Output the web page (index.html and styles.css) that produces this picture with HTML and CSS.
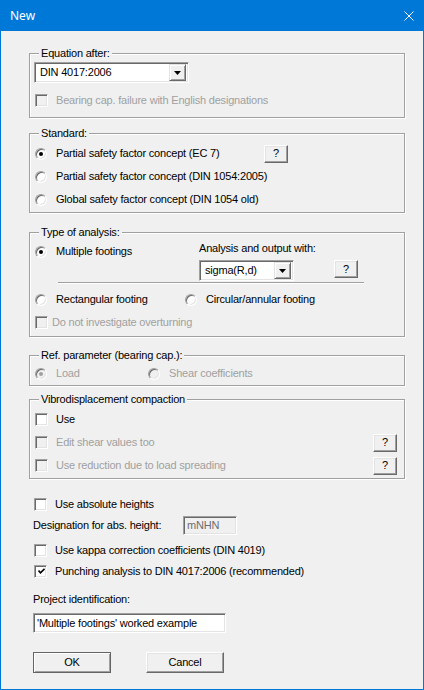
FILE: index.html
```html
<!DOCTYPE html>
<html>
<head>
<meta charset="utf-8">
<title>New</title>
<link rel="stylesheet" href="styles.css">
</head>
<body>
<div class="win">
  <div class="titlebar">
    <span class="title">New</span>
    <svg class="close" width="10" height="10" viewBox="0 0 10 10"><path d="M0.5 0.5L9.5 9.5M9.5 0.5L0.5 9.5" stroke="#fff" stroke-width="1" fill="none"/></svg>
  </div>
  <div class="content">
    <div class="group g1">
      <div class="legend">Equation after:</div>
      <div class="combo combo1"><span class="combo-text">DIN 4017:2006</span><span class="combo-btn"><svg width="7" height="4" viewBox="0 0 7 4"><polygon points="0,0 7,0 3.5,4" fill="#000"/></svg></span></div>
      <div class="row r13 dis"><span class="check disbox"></span><span class="lbl">Bearing cap. failure with English designations</span></div>
    </div>

    <div class="group g2">
      <div class="legend">Standard:</div>
      <div class="row r23 first"><span class="radio on"></span><span class="lbl wide">Partial safety factor concept (EC 7)</span><span class="qbtn">?</span></div>
      <div class="row r23"><span class="radio"></span><span class="lbl">Partial safety factor concept (DIN 1054:2005)</span></div>
      <div class="row r23"><span class="radio"></span><span class="lbl">Global safety factor concept (DIN 1054 old)</span></div>
    </div>

    <div class="group g3">
      <div class="legend">Type of analysis:</div>
      <div class="analysis">
        <div class="row r23 amulti"><span class="radio on"></span><span class="lbl">Multiple footings</span></div>
        <div class="acol">
          <div class="alabel">Analysis and output with:</div>
          <div class="arow">
            <div class="combo combo2"><span class="combo-text">sigma(R,d)</span><span class="combo-btn"><svg width="7" height="4" viewBox="0 0 7 4"><polygon points="0,0 7,0 3.5,4" fill="#000"/></svg></span></div>
            <span class="qbtn qsep">?</span>
          </div>
        </div>
      </div>
      <div class="sep"></div>
      <div class="row r23 rshapes"><span class="item shape1"><span class="radio"></span><span class="lbl">Rectangular footing</span></span><span class="item"><span class="radio"></span><span class="lbl">Circular/annular footing</span></span></div>
      <div class="row r23 dis"><span class="check disbox"></span><span class="lbl tight">Do not investigate overturning</span></div>
    </div>

    <div class="group g4">
      <div class="legend">Ref. parameter (bearing cap.):</div>
      <div class="row r21 first dis"><span class="item load"><span class="radio on disr"></span><span class="lbl">Load</span></span><span class="item"><span class="radio disr"></span><span class="lbl">Shear coefficients</span></span></div>
    </div>

    <div class="group g5">
      <div class="legend">Vibrodisplacement compaction</div>
      <div class="row r23 first"><span class="check"></span><span class="lbl">Use</span></div>
      <div class="row r23 dis"><span class="check disbox"></span><span class="lbl">Edit shear values too</span><span class="qbtn qright">?</span></div>
      <div class="row r23 dis"><span class="check disbox"></span><span class="lbl">Use reduction due to load spreading</span><span class="qbtn qright">?</span></div>
    </div>

    <div class="plain">
      <div class="row r23"><span class="check"></span><span class="lbl">Use absolute heights</span></div>
      <div class="row r19 desig"><span class="dlabel">Designation for abs. height:</span><span class="field fdis">mNHN</span></div>
      <div class="row r21 kappa"><span class="check"></span><span class="lbl">Use kappa correction coefficients (DIN 4019)</span></div>
      <div class="row r21"><span class="check"><svg width="7" height="7" viewBox="0 0 7 7"><path d="M0.5 2.5L2.5 4.8L6.5 0.8" stroke="#000" stroke-width="1.6" fill="none"/></svg></span><span class="lbl">Punching analysis to DIN 4017:2006 (recommended)</span></div>
      <div class="plabel">Project identification:</div>
      <div class="field fproj">'Multiple footings' worked example</div>
      <div class="buttons"><span class="btn btn-default">OK</span><span class="btn">Cancel</span></div>
    </div>
  </div>
</div>
</body>
</html>
```

FILE: styles.css
```css
* { box-sizing: border-box; }
html, body { margin: 0; padding: 0; background: #f0f0f0; }
body {
  font-family: "Liberation Sans", Arial, sans-serif;
  font-size: 11px;
  line-height: 13px;
  color: #000;
  letter-spacing: -0.2px;
}
.win {
  width: 424px;
  height: 690px;
  border: 1px solid #0078d7;
  background: #f0f0f0;
  overflow: hidden;
}
.titlebar {
  height: 30px;
  background: #0078d7;
  color: #fff;
  display: flex;
  align-items: center;
  justify-content: space-between;
  padding: 0 9px;
}
.title {
  font-family: "Noto Sans", "Open Sans", sans-serif;
  font-size: 12px;
  line-height: 16px;
  letter-spacing: 0;
}
.close { display: block; }
.content { padding: 0 18px 0 28px; }

.group {
  border: 1px solid #a0a0a0;
  box-shadow: inset 1px 1px #fff, 1px 1px #fff;
  padding: 0 0 0 5px;
}
.legend {
  width: fit-content;
  height: 13px;
  margin: -7px 0 0 4px;
  padding: 0 2px;
  background: #f0f0f0;
  white-space: nowrap;
}
.g1 { margin-top: 22px; padding-bottom: 10px; }
.g2 { margin-top: 15px; padding-bottom: 1px; }
.g3 { margin-top: 19px; padding-bottom: 2px; }
.g4 { margin-top: 18px; padding-bottom: 1px; }
.g5 { margin-top: 13px; padding-bottom: 1px; padding-right: 7px; }

.row { display: flex; align-items: center; white-space: nowrap; }
.r13 { height: 13px; }
.r19 { height: 19px; }
.r21 { height: 21px; }
.r23 { height: 23px; }
.first { margin-top: 2px; }
.g4 .first { margin-top: 1px; }
.g1 .r13 { margin-top: 11px; }
.dis .lbl { color: #a0a0a0; }

.lbl { margin-left: 9px; }
.check + .lbl { margin-left: 8px; }
.lbl.tight { margin-left: 4px; }
.lbl.wide { width: 208px; }
.item { display: flex; align-items: center; }
.shape1 { width: 150px; }
.load { width: 113px; }

.check {
  width: 13px;
  height: 13px;
  flex: none;
  background: #fff;
  border: 1px solid;
  border-color: #a0a0a0 #fff #fff #a0a0a0;
  box-shadow: inset 1px 1px #696969, inset -1px -1px #e3e3e3;
  display: flex;
  align-items: center;
  justify-content: center;
}
.check svg { display: block; margin: 0 0 0 1px; }
.check.disbox { background: #f0f0f0; }

.radio {
  width: 12px;
  height: 12px;
  flex: none;
  border-radius: 50%;
  background: #fff;
  border: 1px solid;
  border-color: #a0a0a0 #fff #fff #a0a0a0;
  box-shadow: inset 1px 1px #696969, inset -1px -1px #e3e3e3;
  display: flex;
  align-items: center;
  justify-content: center;
}
.radio.on::after {
  content: "";
  width: 4px;
  height: 4px;
  border-radius: 50%;
  background: #000;
}
.radio.disr { background: #f0f0f0; }
.radio.disr.on::after { background: #a0a0a0; }

.qbtn {
  width: 24px;
  height: 18px;
  flex: none;
  display: flex;
  align-items: center;
  justify-content: center;
  background: #f0f0f0;
  border: 1px solid;
  border-color: #fff #696969 #696969 #fff;
  box-shadow: inset -1px -1px #a0a0a0, inset 1px 1px #e3e3e3;
  color: #000;
}
.qright { margin-left: auto; }
.dis .qbtn { color: #000; }

.combo {
  height: 21px;
  display: flex;
  align-items: center;
  background: #fff;
  border: 1px solid;
  border-color: #a0a0a0 #fff #fff #a0a0a0;
  box-shadow: inset 1px 1px #696969, inset -1px -1px #e3e3e3;
  padding: 2px 2px 2px 5px;
}
.combo-text { flex: 1; white-space: nowrap; }
.combo-btn {
  width: 17px;
  height: 17px;
  flex: none;
  display: flex;
  align-items: center;
  justify-content: center;
  background: #f0f0f0;
  border: 1px solid;
  border-color: #e3e3e3 #696969 #696969 #e3e3e3;
  box-shadow: inset 1px 1px #fff, inset -1px -1px #a0a0a0;
}
.combo-btn svg { display: block; }
.combo1 { width: 155px; margin: 2px 0 0 -1px; }
.combo2 { width: 95px; }

.analysis {
  display: grid;
  grid-template-columns: 164px 1fr;
  height: 43px;
}
.amulti { margin-top: 1px; }
.alabel { margin-top: 3px; height: 13px; white-space: nowrap; }
.arow { display: flex; margin-top: 5px; align-items: flex-start; }
.qsep { margin-left: 40px; }
.sep {
  margin-left: 23px;
  width: 306px;
  height: 2px;
  border-top: 1px solid #a0a0a0;
  border-bottom: 1px solid #fff;
}
.rshapes { margin-top: 4px; }

.plain { padding-left: 5px; }
.plain > .row:first-child { margin-top: 14px; }
.dlabel { width: 150px; margin-left: -1px; flex: none; }
.field {
  display: flex;
  align-items: center;
  background: #fff;
  border: 1px solid;
  border-color: #a0a0a0 #fff #fff #a0a0a0;
  box-shadow: inset 1px 1px #696969, inset -1px -1px #e3e3e3;
  padding: 0 2px 0 3px;
  white-space: nowrap;
}
.fdis { width: 54px; height: 19px; background: #f0f0f0; color: #6d6d6d; }
.kappa { margin-top: 5px; }
.plabel { margin-top: 11px; margin-left: -1px; height: 13px; }
.fproj { width: 193px; height: 20px; margin-top: 7px; margin-left: -1px; }
.buttons { display: flex; gap: 35px; margin-top: 19px; margin-left: -1px; }
.btn {
  width: 78px;
  height: 21px;
  display: flex;
  align-items: center;
  justify-content: center;
  background: #f0f0f0;
  border: 1px solid;
  border-color: #fff #696969 #696969 #fff;
  box-shadow: inset -1px -1px #a0a0a0, inset 1px 1px #e3e3e3;
}
.btn-default {
  border-color: #646464;
  box-shadow: inset 1px 1px #fff, inset -1px -1px #a0a0a0;
}
```
